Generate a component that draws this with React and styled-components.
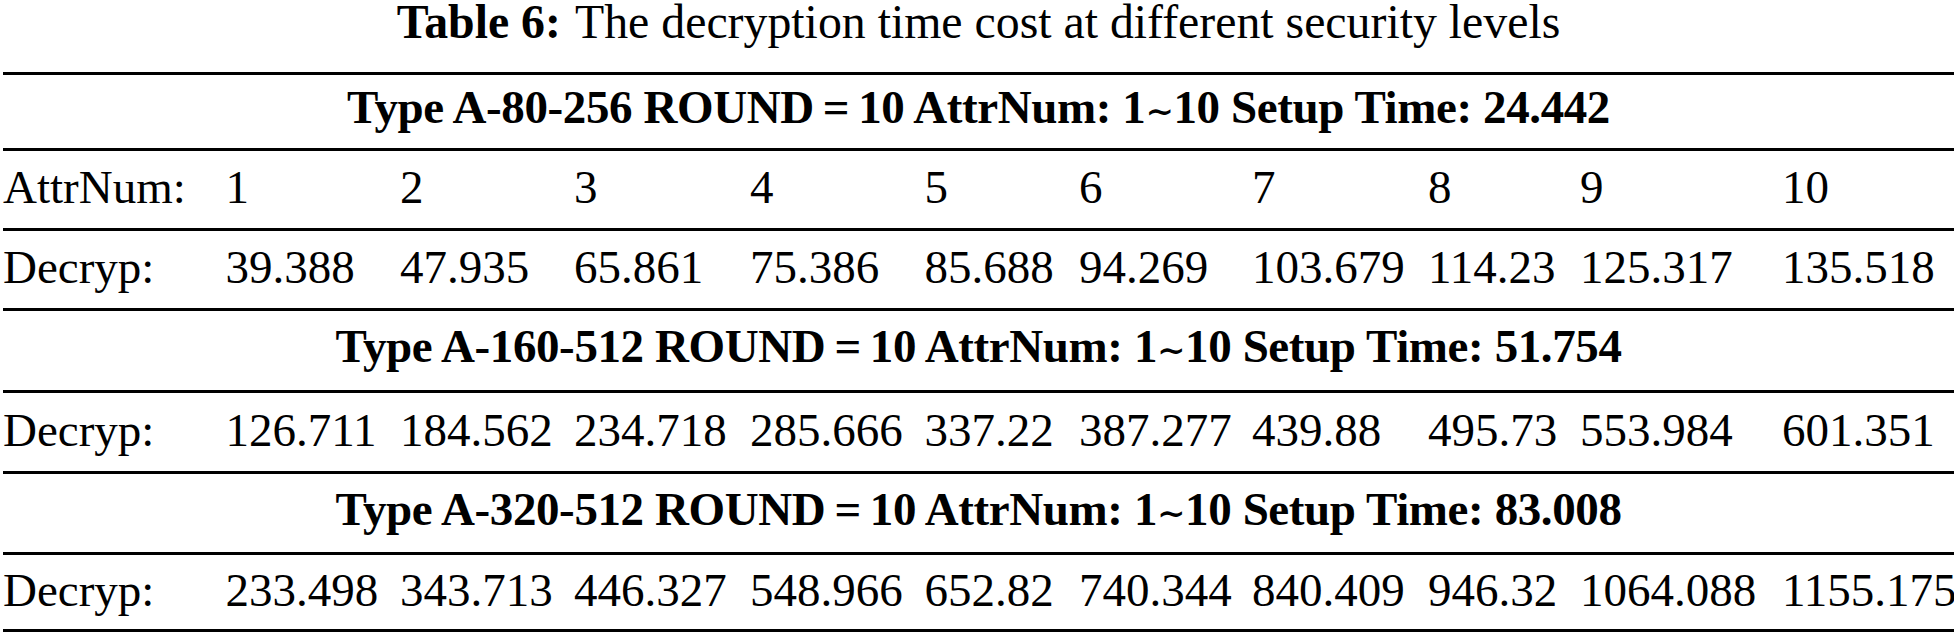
import styled, { createGlobalStyle } from "styled-components";

const GlobalStyle = createGlobalStyle`
  html, body {
    margin: 0;
    padding: 0;
    background: #fff;
  }
  body {
    font-family: "Liberation Serif", "Times New Roman", serif;
    color: #000;
  }
`;

const COLUMNS = "222.5px 174.5px 174px 176px 174.5px 154.5px 173px 176px 152px 202px 1fr";

const Page = styled.div`
  width: 1954px;
  padding-left: 3px;
  box-sizing: border-box;
`;

const Caption = styled.div`
  font-size: 47.8px;
  line-height: 44px;
  text-align: center;
  margin-bottom: 28px;
  white-space: nowrap;
`;

const CaptionLabel = styled.span`
  font-weight: bold;
  margin-right: 3px;
`;

const Table = styled.div`
  font-size: 47px;
  border-bottom: 3px solid #000;
`;

const Row = styled.div`
  display: grid;
  grid-template-columns: ${COLUMNS};
  align-items: center;
  box-sizing: border-box;
  height: ${(p) => p.$h}px;
  padding-bottom: 5px;
  border-top: 3px solid #000;
  white-space: nowrap;
  line-height: 52px;
`;

const GroupRow = styled(Row)`
  grid-template-columns: 1fr;
  justify-items: center;
  font-weight: bold;
  letter-spacing: -0.4px;
`;

const Cell = styled.span``;

const Tilde = styled.span`
  font-family: "DejaVu Serif", serif;
  font-weight: bold;
  font-size: 34px;
`;

const groups = [
  {
    type: "A-80-256",
    setup: "24.442",
    head: 76,
    attr: true,
    values: ["39.388", "47.935", "65.861", "75.386", "85.688", "94.269", "103.679", "114.23", "125.317", "135.518"],
  },
  {
    type: "A-160-512",
    setup: "51.754",
    head: 82,
    values: ["126.711", "184.562", "234.718", "285.666", "337.22", "387.277", "439.88", "495.73", "553.984", "601.351"],
  },
  {
    type: "A-320-512",
    setup: "83.008",
    head: 81,
    values: ["233.498", "343.713", "446.327", "548.966", "652.82", "740.344", "840.409", "946.32", "1064.088", "1155.175"],
  },
];

const dataHeights = [80, 81, 77];

export default function App() {
  return (
    <Page>
      <GlobalStyle />
      <Caption>
        <CaptionLabel>Table 6:</CaptionLabel> The decryption time cost at different security levels
      </Caption>
      <Table>
        {groups.map((g, gi) => (
          <div key={g.type}>
            <GroupRow $h={g.head}>
              <Cell>
                Type {g.type} ROUND{"\u2009=\u2009"}10 AttrNum: 1<Tilde>{"\u223C"}</Tilde>10 Setup Time: {g.setup}
              </Cell>
            </GroupRow>
            {g.attr && (
              <Row $h={80}>
                <Cell>AttrNum:</Cell>
                {Array.from({ length: 10 }, (_, i) => (
                  <Cell key={i}>{i + 1}</Cell>
                ))}
              </Row>
            )}
            <Row $h={dataHeights[gi]}>
              <Cell>Decryp:</Cell>
              {g.values.map((v) => (
                <Cell key={v}>{v}</Cell>
              ))}
            </Row>
          </div>
        ))}
      </Table>
    </Page>
  );
}
